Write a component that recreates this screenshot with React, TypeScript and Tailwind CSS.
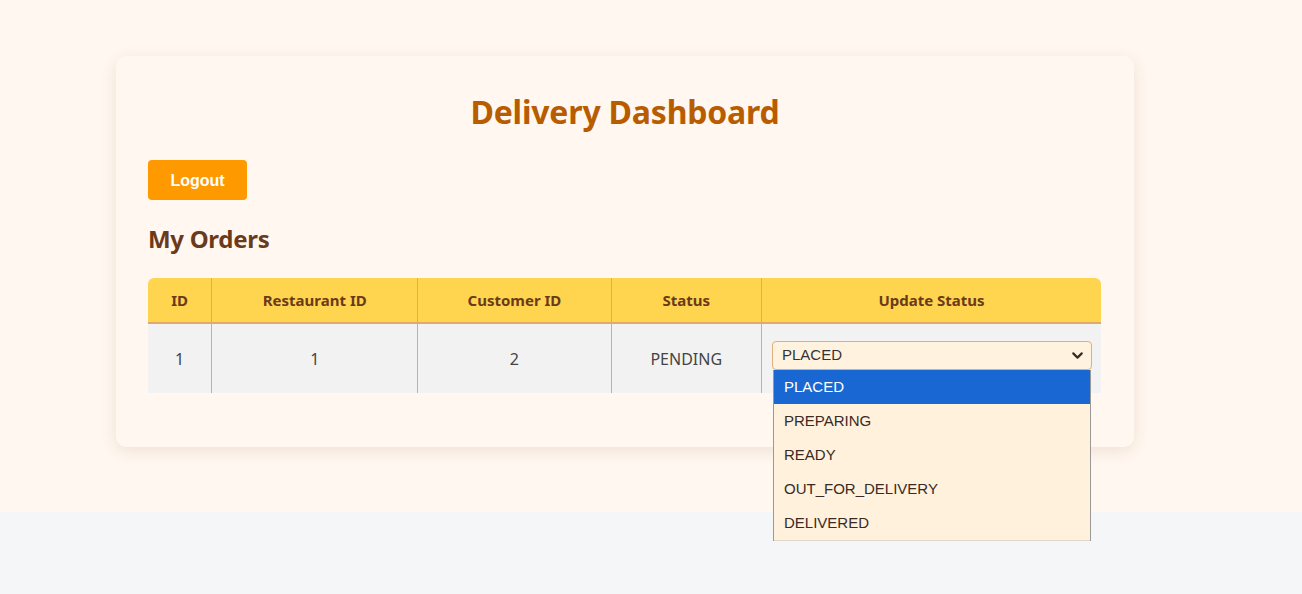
import { ChevronDown } from "lucide-react";

const orders = [{ id: 1, restaurantId: 1, customerId: 2, status: "PENDING" }];

const statuses = ["PLACED", "PREPARING", "READY", "OUT_FOR_DELIVERY", "DELIVERED"];

const ui = { fontFamily: '"Noto Sans", "Open Sans", sans-serif' };
const arial = { fontFamily: '"Liberation Sans", Arial, sans-serif' };

export default function App() {
  return (
    <div className="min-h-[594px] bg-[#f5f6f8]" style={ui}>
      <div className="h-[512px] bg-[#fff7f0] pt-[56px] pl-[116px]">
        <div className="w-[1018px] rounded-[10px] bg-[#fff7f0] px-8 pt-[34px] pb-[54px] shadow-[0_4px_16px_rgba(120,70,20,0.12)]">
          <h1 className="text-center text-[32px] leading-[44px] font-bold tracking-[-0.2px] text-[#b85c00]">
            Delivery Dashboard
          </h1>

          <button
            className="mt-[26px] h-10 w-[99px] rounded-[4px] bg-[#ff9900] pt-px text-[16px] font-bold text-white"
            style={arial}
          >
            Logout
          </button>

          <h2 className="mt-[22px] text-[24px] leading-[34px] font-bold tracking-[-0.3px] text-[#6b3a1a]">My Orders</h2>

          <table className="mt-[22px] w-[953px] border-collapse text-center">
            <thead>
              <tr className="h-[45px] bg-[#ffd54f] text-[15px] font-bold text-[#6b3a1a]">
                <th className="w-[64px] rounded-tl-[6px] border-r border-b-2 border-[#e0a96d]">ID</th>
                <th className="w-[207px] border-r border-b-2 border-[#e0a96d]">Restaurant ID</th>
                <th className="w-[194px] border-r border-b-2 border-[#e0a96d]">Customer ID</th>
                <th className="w-[151px] border-r border-b-2 border-[#e0a96d]">Status</th>
                <th className="rounded-tr-[6px] border-b-2 border-[#e0a96d]">Update Status</th>
              </tr>
            </thead>
            <tbody>
              {orders.map((o) => (
                <tr key={o.id} className="h-[70px] bg-[#f2f2f2] text-[16px] text-[#444]">
                  <td className="border-r border-[#e0a96d]">{o.id}</td>
                  <td className="border-r border-[#e0a96d]">{o.restaurantId}</td>
                  <td className="border-r border-[#e0a96d]">{o.customerId}</td>
                  <td className="border-r border-[#e0a96d]">{o.status}</td>
                  <td className="pr-[9px] pb-[6px] pl-[10px] text-left">
                    <div className="relative" style={arial}>
                      <div className="flex h-[29px] w-[320px] items-center justify-between rounded-[4px] border border-[#e0b07a] bg-[#fff3e0] pr-[5px] pl-[9px] text-[15px] text-[#333]">
                        <span>PLACED</span>
                        <ChevronDown size={17} strokeWidth={3} className="text-[#3a2a20]" />
                      </div>
                      <ul className="absolute top-[29px] left-px z-10 h-[171px] w-[318px] overflow-hidden border-x border-[#999] bg-[#fff1dc] text-[15px] text-[#3a2a24]">
                        {statuses.map((s, i) => (
                          <li
                            key={s}
                            className={
                              i === 0
                                ? "flex h-[34px] items-center bg-[#1967d2] px-[10px] text-white"
                                : "flex h-[34px] items-center px-[10px]"
                            }
                          >
                            {s}
                          </li>
                        ))}
                        <li className="h-px bg-[#e0d6c8]" />
                      </ul>
                    </div>
                  </td>
                </tr>
              ))}
            </tbody>
          </table>
        </div>
      </div>
    </div>
  );
}
